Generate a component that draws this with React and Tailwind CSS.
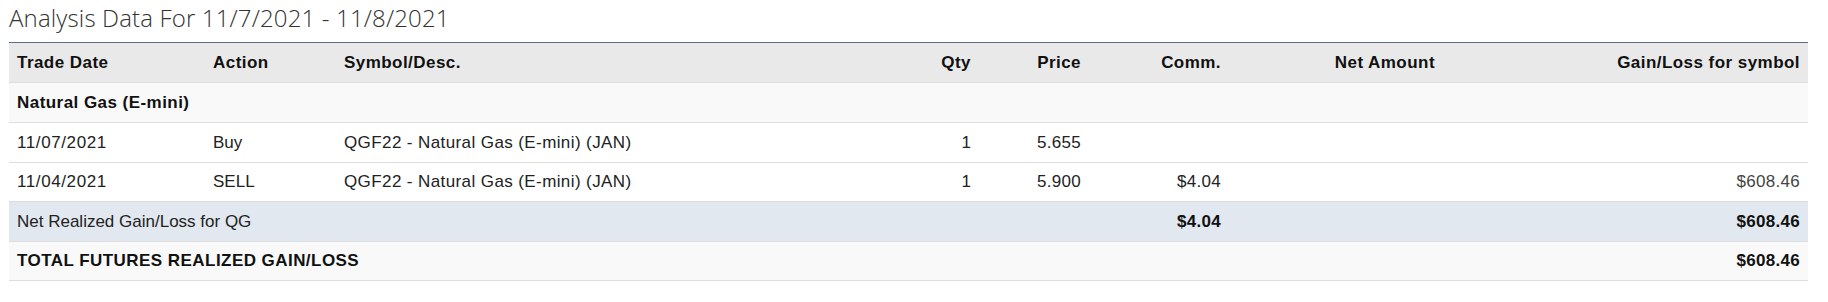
import React from "react";

const rows = [
  { date: "11/07/2021", action: "Buy", symbol: "QGF22 - Natural Gas (E-mini) (JAN)", qty: "1", price: "5.655", comm: "", net: "", gain: "" },
  { date: "11/04/2021", action: "SELL", symbol: "QGF22 - Natural Gas (E-mini) (JAN)", qty: "1", price: "5.900", comm: "$4.04", net: "", gain: "$608.46" },
];

export default function App() {
  return (
    <div className="bg-white w-[1828px] h-[302px] pl-[9px] pr-[20px] font-['Liberation_Sans',Arial,sans-serif] text-[17px] text-[#222]">
      <h1 className="font-['Open_Sans',sans-serif] font-light text-[24px] leading-[33px] pt-[1px] h-[42px] text-[#333] tracking-[0.15px]">
        Analysis Data For 11/7/2021 - 11/8/2021
      </h1>

      <table className="w-full table-fixed border-collapse">
        <colgroup>
          <col className="w-[196px]" />
          <col className="w-[131px]" />
          <col className="w-[553px]" />
          <col className="w-[90px]" />
          <col className="w-[110px]" />
          <col className="w-[140px]" />
          <col className="w-[214px]" />
          <col />
        </colgroup>
        <thead>
          <tr className="bg-[#e9e9e9] border-t border-[#5b6e82] text-[#111] font-bold tracking-[0.45px]">
            <th className="h-[40px] px-2 text-left border-b border-[#dddddd]">Trade Date</th>
            <th className="px-2 text-left border-b border-[#dddddd]">Action</th>
            <th className="px-2 text-left border-b border-[#dddddd]">Symbol/Desc.</th>
            <th className="px-2 text-right border-b border-[#dddddd]">Qty</th>
            <th className="px-2 text-right border-b border-[#dddddd]">Price</th>
            <th className="px-2 text-right border-b border-[#dddddd]">Comm.</th>
            <th className="px-2 text-right border-b border-[#dddddd]">Net Amount</th>
            <th className="px-2 text-right border-b border-[#dddddd]">Gain/Loss for symbol</th>
          </tr>
        </thead>
        <tbody>
          <tr className="bg-[#f9f9f9] border-b border-[#dddddd]">
            <td colSpan={8} className="h-[40px] px-2 font-bold text-[#111] tracking-[0.45px]">
              Natural Gas (E-mini)
            </td>
          </tr>
          {rows.map((r) => (
            <tr key={r.date} className="bg-white border-b border-[#dddddd]">
              <td className="h-[39.5px] px-2 tracking-[0.6px]">{r.date}</td>
              <td className="px-2">{r.action}</td>
              <td className="px-2 tracking-[0.4px]">{r.symbol}</td>
              <td className="px-2 text-right">{r.qty}</td>
              <td className="px-2 text-right tracking-[0.3px]">{r.price}</td>
              <td className="px-2 text-right tracking-[0.3px]">{r.comm}</td>
              <td className="px-2 text-right">{r.net}</td>
              <td className="px-2 text-right text-[#444] tracking-[0.3px]">{r.gain}</td>
            </tr>
          ))}
          <tr className="bg-[#e2e8ef] border-b border-[#dddddd]">
            <td colSpan={5} className="h-[39.5px] px-2">Net Realized Gain/Loss for QG</td>
            <td className="px-2 text-right font-bold text-[#111] tracking-[0.3px]">$4.04</td>
            <td className="px-2"></td>
            <td className="px-2 text-right font-bold text-[#111] tracking-[0.3px]">$608.46</td>
          </tr>
          <tr className="bg-[#f9f9f9] border-b border-[#dddddd] font-bold text-[#111]">
            <td colSpan={7} className="h-[39.5px] px-2 tracking-[0.45px]">TOTAL FUTURES REALIZED GAIN/LOSS</td>
            <td className="px-2 text-right tracking-[0.3px]">$608.46</td>
          </tr>
        </tbody>
      </table>
    </div>
  );
}
